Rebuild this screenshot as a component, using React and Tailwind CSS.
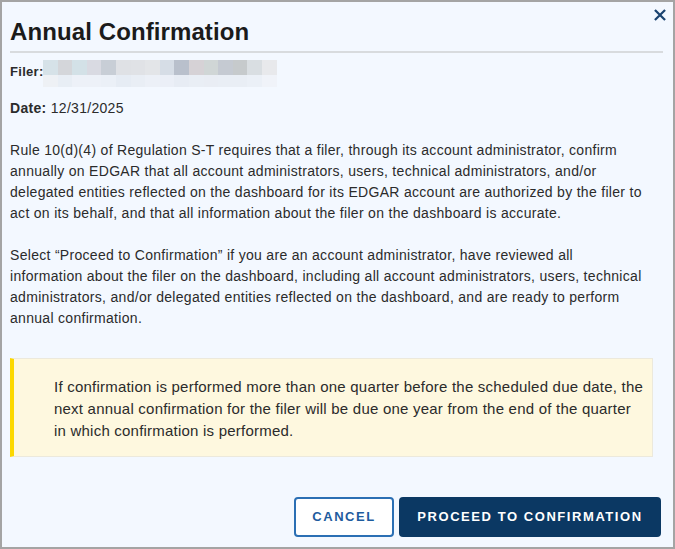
import React from 'react';

const mosaicTop = [
  '#d6e2e8', '#d4d6da', '#d3e1e7', '#d9dae2', '#c8ced6', '#dfe1e5', '#e0e2e6', '#e3e5e8',
  '#d6dde6', '#b9c0cc', '#d6d2d6', '#d0d6d6', '#c5cad2', '#c6cacc', '#d9dee2', '#e8e9ec',
];
const mosaicBottom = [
  '#eef1f5', '#e8eef5', '#edf1f8', '#edf1f8', '#ebf0f7', '#e6ecf4', '#e9eef5', '#ecf0f7',
  '#ebeff7', '#e7ecf4', '#e9eef5', '#e9edf4', '#e9eef5', '#e9eef5', '#ebf0f7', '#f0f3f9',
];

const Redacted = () => (
  <div className="flex flex-col">
    <div className="flex">
      {mosaicTop.map((c, i) => (
        <div key={i} className="w-[14.6px] h-[15px]" style={{ backgroundColor: c }} />
      ))}
    </div>
    <div className="flex">
      {mosaicBottom.map((c, i) => (
        <div key={i} className="w-[14.6px] h-[12px]" style={{ backgroundColor: c }} />
      ))}
    </div>
  </div>
);

const App = () => {
  return (
    <div
      className="relative w-[675px] h-[549px] border-2 border-[#a4a4a4] bg-[#f3f8ff] text-[14px] tracking-[0.3px] text-[#2b2b2b]"
      style={{ fontFamily: '"Liberation Sans", Arial, sans-serif' }}
    >
      <button
        type="button"
        aria-label="Close"
        className="absolute top-[6px] right-[6px] w-[14px] h-[14px] flex items-center justify-center text-[#1a4370]"
      >
        <svg viewBox="0 0 14 14" width="12" height="12">
          <path d="M2 2 L12 12 M12 2 L2 12" stroke="currentColor" strokeWidth="2.6" strokeLinecap="square" />
        </svg>
      </button>

      <div className="pt-[16px] pl-[8px] pr-[10px]">
        <h2 className="text-[24px] tracking-[0.1px] font-bold leading-[28px] pb-[5px] border-b-2 border-[#d8dbde] text-[#1b1b1b]">
          Annual Confirmation
        </h2>
      </div>

      <div className="pl-[8px] pr-[20px]">
        <div className="flex items-start mt-[7px]">
          <span className="w-[33px] font-bold text-[13px] leading-[21px] mt-[1px]">Filer:</span>
          <Redacted />
        </div>

        <p className="mt-[11px] leading-[21px]">
          <span className="font-bold">Date:</span> 12/31/2025
        </p>

        <div className="pr-[10px]">
          <p className="mt-[21px] leading-[21px]">
            Rule 10(d)(4) of Regulation S-T requires that a filer, through its account administrator, confirm
            annually on EDGAR that all account administrators, users, technical administrators, and/or
            delegated entities reflected on the dashboard for its EDGAR account are authorized by the filer to
            act on its behalf, and that all information about the filer on the dashboard is accurate.
          </p>

          <p className="mt-[21px] leading-[21px]">
            Select “Proceed to Confirmation” if you are an account administrator, have reviewed all
            information about the filer on the dashboard, including all account administrators, users, technical
            administrators, and/or delegated entities reflected on the dashboard, and are ready to perform
            annual confirmation.
          </p>
        </div>

        <div className="mt-[29px] bg-[#fef8df] border border-[#ece9dc] border-l-4 border-l-[#fcd800] pl-[40px] pr-[6px] pt-[17px] pb-[14px]">
          <p className="text-[15px] tracking-[0.22px] leading-[22px]">
            If confirmation is performed more than one quarter before the scheduled due date, the
            next annual confirmation for the filer will be due one year from the end of the quarter
            in which confirmation is performed.
          </p>
        </div>
      </div>

      <div className="flex justify-end gap-[5px] pr-[12px] mt-[40px]">
        <button
          type="button"
          className="w-[100px] h-[40px] rounded-[4px] border-2 border-[#2b6fb4] bg-white text-[#1e5c9e] font-bold text-[13px] tracking-[0.12em]"
        >
          CANCEL
        </button>
        <button
          type="button"
          className="w-[262px] h-[40px] rounded-[4px] bg-[#0b3863] text-white font-bold text-[13px] tracking-[0.12em]"
        >
          PROCEED TO CONFIRMATION
        </button>
      </div>
    </div>
  );
};

export default App;
